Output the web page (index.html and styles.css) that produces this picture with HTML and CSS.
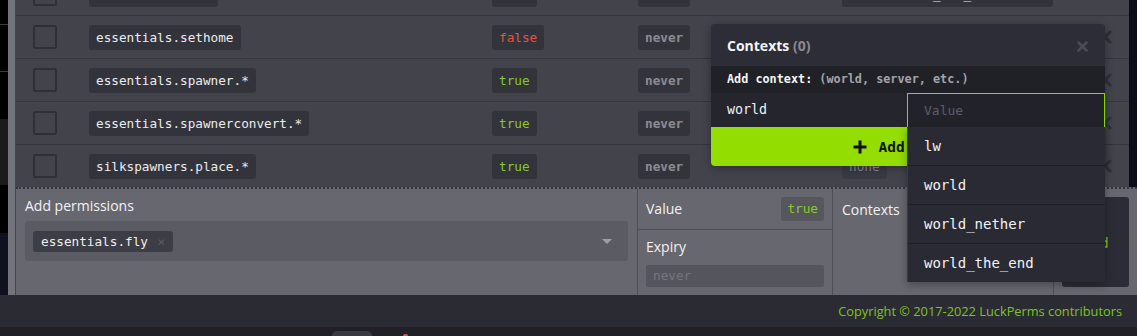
FILE: index.html
```html
<!DOCTYPE html>
<html>
<head>
<meta charset="utf-8">
<title>LuckPerms editor</title>
<link rel="stylesheet" href="styles.css">
</head>
<body>
<div class="app">
  <div class="top">
    <div class="edge">
      <div class="edge-line"></div>
      <div class="edge-line second"></div>
      <div class="edge-dots"></div>
      <div class="edge-dots navy-dots"></div>
    </div>
    <div class="scrollbar"></div>
    <div class="main">
      <div class="table-wrap">
        <div class="table">
          <div class="row first">
            <div class="cell check"><span class="checkbox"></span></div>
            <div class="cell"><span class="pill">essentials.home</span></div>
            <div class="cell"><span class="pill true">true</span></div>
            <div class="cell"><span class="pill never">never</span></div>
            <div class="cell"><span class="pill ctx">world=world_the_end</span></div>
            <div class="cell del"></div>
          </div>
          <div class="row">
            <div class="cell check"><span class="checkbox"></span></div>
            <div class="cell"><span class="pill">essentials.sethome</span></div>
            <div class="cell"><span class="pill false">false</span></div>
            <div class="cell"><span class="pill never">never</span></div>
            <div class="cell"></div>
            <div class="cell del"><svg width="14" height="14" viewBox="0 0 14 14"><path d="M2 2L12 12M12 2L2 12" stroke="#2f2f38" stroke-width="3" stroke-linecap="round"/></svg></div>
          </div>
          <div class="row">
            <div class="cell check"><span class="checkbox"></span></div>
            <div class="cell"><span class="pill">essentials.spawner.*</span></div>
            <div class="cell"><span class="pill true">true</span></div>
            <div class="cell"><span class="pill never">never</span></div>
            <div class="cell"></div>
            <div class="cell del"><svg width="14" height="14" viewBox="0 0 14 14"><path d="M2 2L12 12M12 2L2 12" stroke="#2f2f38" stroke-width="3" stroke-linecap="round"/></svg></div>
          </div>
          <div class="row">
            <div class="cell check"><span class="checkbox"></span></div>
            <div class="cell"><span class="pill">essentials.spawnerconvert.*</span></div>
            <div class="cell"><span class="pill true">true</span></div>
            <div class="cell"><span class="pill never">never</span></div>
            <div class="cell"></div>
            <div class="cell del"><svg width="14" height="14" viewBox="0 0 14 14"><path d="M2 2L12 12M12 2L2 12" stroke="#2f2f38" stroke-width="3" stroke-linecap="round"/></svg></div>
          </div>
          <div class="row">
            <div class="cell check"><span class="checkbox"></span></div>
            <div class="cell"><span class="pill">silkspawners.place.*</span></div>
            <div class="cell"><span class="pill true">true</span></div>
            <div class="cell"><span class="pill never">never</span></div>
            <div class="cell"><span class="pill none">none</span></div>
            <div class="cell del"><svg width="14" height="14" viewBox="0 0 14 14"><path d="M2 2L12 12M12 2L2 12" stroke="#2f2f38" stroke-width="3" stroke-linecap="round"/></svg></div>
          </div>
        </div>
        <div class="navy"></div>
      </div>
      <div class="panel">
        <div class="pcol add-col">
          <div class="label">Add permissions</div>
          <div class="select">
            <span class="chip">essentials.fly <span class="chip-x">×</span></span>
            <span class="arrow"></span>
          </div>
        </div>
        <div class="pcol value-col">
          <div class="value-row">
            <span class="label">Value</span>
            <span class="pill small true">true</span>
          </div>
          <div class="expiry">
            <div class="label">Expiry</div>
            <div class="exp-input">never</div>
          </div>
        </div>
        <div class="pcol ctx-col">
          <div class="label">Contexts</div>
        </div>
        <div class="pcol btn-col">
          <div class="add-btn">Add</div>
        </div>
      </div>
    </div>
  </div>
  <footer class="footer">Copyright © 2017-2022 LuckPerms contributors</footer>
  <div class="taskbar"><span class="tab"></span><span class="red"></span></div>

  <div class="popup">
    <div class="popup-head">
      <span class="popup-title">Contexts <span class="count">(0)</span></span>
      <svg class="close" width="11" height="11" viewBox="0 0 11 11"><path d="M1.5 1.5L9.5 9.5M9.5 1.5L1.5 9.5" stroke="#4b4b56" stroke-width="2.6" stroke-linecap="round"/></svg>
    </div>
    <div class="popup-sub"><b>Add context:</b> <span class="hint">(world, server, etc.)</span></div>
    <div class="popup-inputs">
      <div class="key-input">world</div>
      <div class="val-input">Value</div>
    </div>
    <div class="popup-btn">
      <svg width="14" height="14" viewBox="0 0 14 14"><path d="M7 0.5V13.5M0.5 7H13.5" stroke="#111" stroke-width="3"/></svg>
      <span>Add context</span>
    </div>
  </div>
  <div class="dropdown">
    <div class="opt">lw</div>
    <div class="opt">world</div>
    <div class="opt">world_nether</div>
    <div class="opt">world_the_end</div>
  </div>
</div>
</body>
</html>
```

FILE: styles.css
```css
* { box-sizing: border-box; }
html, body { margin: 0; padding: 0; background: #000; }
body { font-family: "Open Sans", "Noto Sans", sans-serif; }

.app {
  position: relative;
  width: 1137px;
  height: 336px;
  overflow: hidden;
  display: flex;
  flex-direction: column;
}

.top { display: flex; height: 295px; }

.edge {
  width: 8px;
  background: #000;
  display: flex;
  flex-direction: column;
}
.edge-line { height: 1px; background: #3c3c3c; margin-top: 24px; }
.edge-line.second { margin-top: 46px; }
.edge-dots { height: 67px; margin-top: 47px; background: #1b1b1e; }
.edge-dots.navy-dots { height: 62px; margin-top: 48px; background: #0f1020; }

.scrollbar {
  width: 8px;
  background: #74747c;
  border-right: 1px solid #45454d;
}

.main { flex: 1; display: flex; flex-direction: column; min-width: 0; }

.table-wrap { display: flex; height: 187px; overflow: hidden; }
.table { width: 1113px; background: #43434c; }
.navy { flex: 1; background: #0c0c18; }

.row {
  display: grid;
  grid-template-columns: 73px 403px 146px 204px 239px 48px;
  height: 43px;
  align-items: center;
  border-bottom: 1px solid #35353e;
}
.row.first { margin-top: -27px; }

.cell { display: flex; align-items: center; }
.cell.check { padding-left: 17px; }
.cell.del { justify-content: center; }

.checkbox {
  width: 24px;
  height: 24px;
  border: 2px solid #2f2f37;
  border-radius: 2px;
}

.pill {
  display: inline-block;
  height: 25px;
  line-height: 25px;
  padding: 0 7px;
  background: #33333c;
  border-radius: 3px;
  font-family: "DejaVu Sans Mono", "Liberation Mono", monospace;
  font-size: 12.7px;
  color: #ececec;
  white-space: nowrap;
}
.pill.true { color: #86cc16; }
.pill.false { color: #e5533f; }
.pill.never { color: #8b8b92; font-weight: bold; }
.pill.none { color: #8b8b92; background: #3a3a44; }
.pill.ctx { width: 211px; }

/* bottom panel */
.panel {
  flex: 1;
  display: flex;
  background: #67676f;
  border-top: 2px dotted #34343c;
}
.pcol { border-right: 1px solid #4e4e57; }
.label { font-size: 14px; line-height: 20px; color: #f2f2f4; }

.add-col { width: 622px; padding: 7px 9px 0 9px; }
.add-col .label { margin-bottom: 5px; }
.select {
  height: 40px;
  background: #5b5b64;
  border-radius: 3px;
  display: flex;
  align-items: center;
  justify-content: space-between;
  padding: 0 16px 0 8px;
}
.chip {
  height: 21px;
  line-height: 21px;
  padding: 0 8px;
  background: #3d3d46;
  border-radius: 3px;
  font-family: "DejaVu Sans Mono", "Liberation Mono", monospace;
  font-size: 12.7px;
  color: #eeeeee;
}
.chip-x { color: #5c5c66; margin-left: 2px; }
.arrow {
  width: 0; height: 0;
  border-left: 5px solid transparent;
  border-right: 5px solid transparent;
  border-top: 5px solid #9d9da4;
}

.value-col { width: 195px; display: flex; flex-direction: column; }
.value-row {
  height: 41px;
  display: flex;
  align-items: center;
  justify-content: space-between;
  padding: 0 8px 0 8px;
  border-bottom: 1px solid #4e4e57;
}
.pill.small { height: 24px; line-height: 24px; background: #56565f; padding: 0 6px; }
.expiry { padding: 7px 8px 0 8px; }
.exp-input {
  margin-top: 8px;
  height: 22px;
  line-height: 22px;
  background: #55555e;
  border-radius: 2px;
  padding-left: 7px;
  font-family: "DejaVu Sans Mono", "Liberation Mono", monospace;
  font-size: 12.7px;
  color: #75757e;
}

.ctx-col { width: 221px; padding: 11px 0 0 9px; }

.btn-col { flex: 1; border-right: none; padding: 8px 8px 8px 8px; }
.add-btn {
  height: 90px;
  width: 67px;
  background: #2c2c36;
  border-radius: 3px;
  display: flex;
  align-items: center;
  justify-content: center;
  color: #86cc16;
  font-size: 14px;
}

.footer {
  height: 32px;
  line-height: 32px;
  background: #2b2b34;
  color: #7fc31d;
  font-size: 12.8px;
  text-align: right;
  padding-right: 15px;
}

.taskbar { flex: 1; background: #202026; position: relative; }
.tab {
  position: absolute;
  left: 332px; top: 4px;
  width: 40px; height: 10px;
  background: #393943;
  border-radius: 5px 5px 0 0;
}
.red {
  position: absolute;
  left: 403px; top: 7px;
  width: 5px; height: 4px;
  background: #d7584a;
  border-radius: 2px 2px 0 0;
}

/* contexts popup overlay */
.popup {
  position: absolute;
  left: 711px;
  top: 24px;
  width: 394px;
  height: 142px;
  background: #2d2d37;
  border-radius: 4px;
  box-shadow: 0 2px 10px rgba(0,0,0,0.35);
  display: flex;
  flex-direction: column;
  overflow: hidden;
}
.popup-head {
  height: 42px;
  display: flex;
  align-items: center;
  justify-content: space-between;
  padding: 0 16px 0 16px;
}
.popup-title { font-weight: bold; font-size: 14px; color: #f4f4f6; }
.count { color: #8a8a92; }
.close { margin-top: 3px; margin-right: 1px; }
.popup-sub {
  height: 27px;
  line-height: 27px;
  background: #202027;
  padding-left: 16px;
  font-family: "DejaVu Sans Mono", "Liberation Mono", monospace;
  font-size: 11.8px;
  color: #f4f4f4;
}
.popup-sub .hint { color: #a3a3aa; font-weight: bold; }
.popup-inputs { height: 34px; display: flex; background: #25252d; }
.key-input {
  width: 196px;
  line-height: 34px;
  padding-left: 16px;
  font-family: "DejaVu Sans Mono", "Liberation Mono", monospace;
  font-size: 13.3px;
  color: #f2f2f2;
}
.val-input {
  flex: 1;
  border: 1px solid #8ed400;
  border-bottom: none;
  background: #22222a;
  line-height: 33px;
  padding-left: 16px;
  font-family: "DejaVu Sans Mono", "Liberation Mono", monospace;
  font-size: 13px;
  color: #5d5d68;
}
.popup-btn {
  flex: 1;
  background: #93dd00;
  display: flex;
  align-items: center;
  justify-content: center;
  gap: 11px;
  padding-left: 12px;
  font-family: "DejaVu Sans Mono", "Liberation Mono", monospace;
  font-weight: bold;
  font-size: 14.5px;
  color: #111;
}

.dropdown {
  position: absolute;
  left: 907px;
  top: 127px;
  width: 198px;
  background: #2a2a34;
  box-shadow: 0 3px 8px rgba(0,0,0,0.3);
  border-left: 1px solid #3a3a44;
}
.opt {
  height: 39px;
  line-height: 38px;
  padding-left: 16px;
  border-bottom: 1px solid #1e1e26;
  font-family: "DejaVu Sans Mono", "Liberation Mono", monospace;
  font-size: 14px;
  color: #f2f2f2;
}
.opt:last-child { border-bottom: none; height: 38px; }
```
